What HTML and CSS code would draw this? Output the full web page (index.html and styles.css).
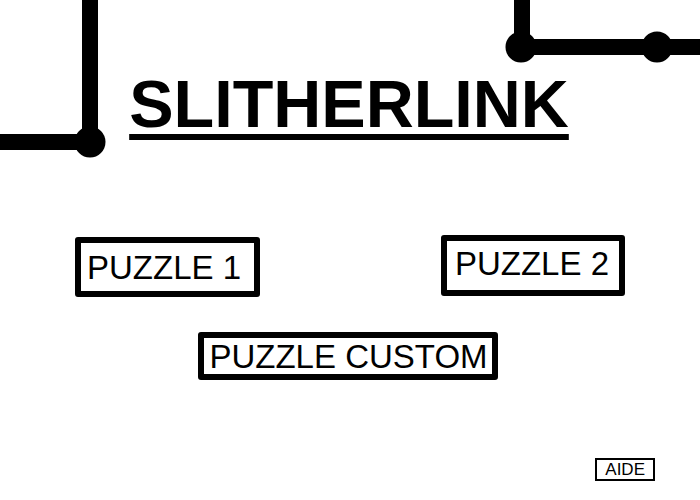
FILE: index.html
```html
<!doctype html>
<html lang="fr">
<head>
<title>Slitherlink</title>
<meta charset="utf-8">
<meta name="viewport" content="width=device-width, initial-scale=1">
<link rel="stylesheet" href="styles.css">
</head>
<body>

<div id="menu">

	<svg id="deco" width="700" height="500" viewBox="0 0 700 500">
		<!-- coin haut gauche -->
		<line x1="90" y1="0" x2="90" y2="142" />
		<line x1="0" y1="142" x2="90" y2="142" />
		<circle cx="90" cy="142" r="15.5" />
		<!-- coin haut droit -->
		<line x1="522" y1="0" x2="522" y2="47" />
		<line x1="521" y1="47" x2="700" y2="47" />
		<circle cx="521" cy="47" r="15.5" />
		<circle cx="657" cy="47" r="15.5" />
	</svg>

	<h1 class="titre"><span>SLITHERLINK</span></h1>

	<div class="rangee">
		<a href="#" class="btn btn-p1">PUZZLE 1</a>
		<a href="#" class="btn btn-p2">PUZZLE 2</a>
	</div>

	<div class="centre">
		<a href="#" class="btn btn-custom">PUZZLE CUSTOM</a>
	</div>

	<div class="bas">
		<a href="#" class="aide">AIDE</a>
	</div>

</div>

</body>
</html>
```

FILE: styles.css
```css
* { margin: 0; padding: 0; box-sizing: border-box; }
html, body { height: 100%; background: #fff; }

body {
	font-family: "Liberation Sans", Arial, sans-serif;
	color: #000;
}

#menu {
	position: relative;
	width: 700px; height: 500px;
	display: flex;
	flex-direction: column;
	overflow: hidden;
}

#deco {
	position: absolute;
	top: 0; left: 0;
	z-index: 0;
}
#deco line { stroke: #000; stroke-width: 16; }
#deco circle { fill: #000; }

.titre, .rangee, .centre, .bas { position: relative; z-index: 1; }

.titre {
	margin-top: 71px;
	padding-right: 2px;
	text-align: center;
	font-size: 66.5px;
	line-height: 66px;
	font-weight: bold;
}
.titre > span {
	text-decoration: underline;
	text-decoration-thickness: 6px;
	text-underline-offset: 7px;
}

a {
	color: #000;
	text-decoration: none;
}

.btn {
	display: block;
	border: 6px solid #000;
	border-radius: 3px;
	font-size: 33px;
	white-space: nowrap;
}

.rangee {
	margin-top: 98px;
	padding: 0 75px;
	display: flex;
	justify-content: space-between;
	align-items: flex-start;
}
.btn-p1 {
	margin-top: 2px;
	padding: 2px 13px 0 6px;
	line-height: 46px;
}
.btn-p2 {
	padding: 0 10px 3px 8px;
	line-height: 46px;
}

.centre {
	margin-top: 35px;
	padding-right: 4px;
	display: flex;
	justify-content: center;
}
.btn-custom {
	padding: 1px 4px 0 5px;
	line-height: 35px;
}

.bas {
	margin-top: 78px;
	padding-right: 45px;
	display: flex;
	justify-content: flex-end;
}
.aide {
	border: 2px solid #000;
	padding: 0 8px 0 8px;
	font-size: 17px;
	line-height: 19px;
}
```
